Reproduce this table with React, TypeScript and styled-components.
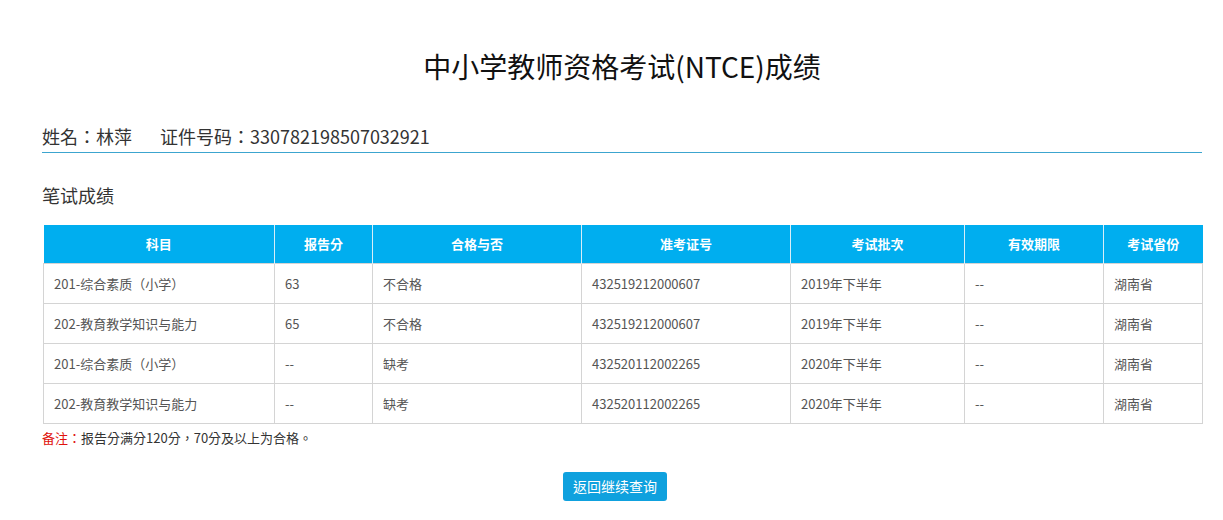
import React from "react";
import styled, { createGlobalStyle } from "styled-components";

const Global = createGlobalStyle`
  html, body { margin: 0; padding: 0; background: #fff; }
  body { font-family: "Noto Sans CJK TC", "Noto Sans CJK SC", "Noto Sans", "Liberation Sans", sans-serif; color: #333; }
`;

const Page = styled.div`
  padding: 46px 21px 0 42px;
`;

const Title = styled.h1`
  margin: 0;
  font-size: 28px;
  line-height: 40px;
  font-weight: 400;
  color: #111;
  text-align: center;
`;

const InfoBar = styled.div`
  margin-top: 35px;
  display: flex;
  gap: 28px;
  font-size: 18px;
  line-height: 30px;
  color: #333;
  border-bottom: 1px solid #3ca5cf;
  padding-bottom: 1px;
`;

const Section = styled.h2`
  margin: 27px 0 0;
  font-size: 18px;
  line-height: 30px;
  font-weight: 400;
  color: #333;
`;

const Table = styled.table`
  margin-top: 15px;
  margin-left: 1px;
  width: 1159px;
  border-collapse: collapse;
  table-layout: fixed;
  font-size: 13px;
`;

const Col = styled.col<{ $w: number }>`
  width: ${(p) => p.$w}px;
`;

const Th = styled.th`
  box-sizing: border-box;
  height: 38px;
  padding: 0;
  background: #00aeef;
  color: #fff;
  font-weight: 700;
  text-align: center;
  border-left: 1px solid #d7eef8;
  &:first-child { border-left: none; }
`;

const Td = styled.td`
  box-sizing: border-box;
  height: 40px;
  padding: 0 0 0 10px;
  color: #555;
  border: 1px solid #d4d4d4;
  white-space: nowrap;
  overflow: hidden;
`;

const Note = styled.p`
  margin: 4px 0 0;
  font-size: 13px;
  line-height: 20px;
  color: #333;
`;

const Red = styled.span`
  color: #e0120c;
`;

const Actions = styled.div`
  margin-top: 24px;
  display: flex;
  justify-content: center;
  padding-right: 14px;
`;

const Button = styled.button`
  height: 29px;
  padding: 0 10px;
  border: none;
  border-radius: 3px;
  background: #0fa1de;
  color: #fff;
  font-family: inherit;
  font-size: 14px;
  cursor: pointer;
`;

const cols: [string, number][] = [
  ["科目", 231],
  ["报告分", 98],
  ["合格与否", 209],
  ["准考证号", 209],
  ["考试批次", 174],
  ["有效期限", 139],
  ["考试省份", 99],
];

const rows = [
  ["201-综合素质（小学）", "63", "不合格", "432519212000607", "2019年下半年", "--", "湖南省"],
  ["202-教育教学知识与能力", "65", "不合格", "432519212000607", "2019年下半年", "--", "湖南省"],
  ["201-综合素质（小学）", "--", "缺考", "432520112002265", "2020年下半年", "--", "湖南省"],
  ["202-教育教学知识与能力", "--", "缺考", "432520112002265", "2020年下半年", "--", "湖南省"],
];

export default function App() {
  return (
    <>
      <Global />
      <Page>
        <Title>中小学教师资格考试(NTCE)成绩</Title>
        <InfoBar>
          <span>姓名：林萍</span>
          <span>证件号码：330782198507032921</span>
        </InfoBar>
        <Section>笔试成绩</Section>
        <Table>
          <colgroup>
            {cols.map(([c, w]) => (
              <Col key={c} $w={w} />
            ))}
          </colgroup>
          <thead>
            <tr>
              {cols.map(([c]) => (
                <Th key={c}>{c}</Th>
              ))}
            </tr>
          </thead>
          <tbody>
            {rows.map((r, i) => (
              <tr key={i}>
                {r.map((c, j) => (
                  <Td key={j}>{c}</Td>
                ))}
              </tr>
            ))}
          </tbody>
        </Table>
        <Note>
          <Red>备注：</Red>报告分满分120分，70分及以上为合格。
        </Note>
        <Actions>
          <Button>返回继续查询</Button>
        </Actions>
      </Page>
    </>
  );
}
